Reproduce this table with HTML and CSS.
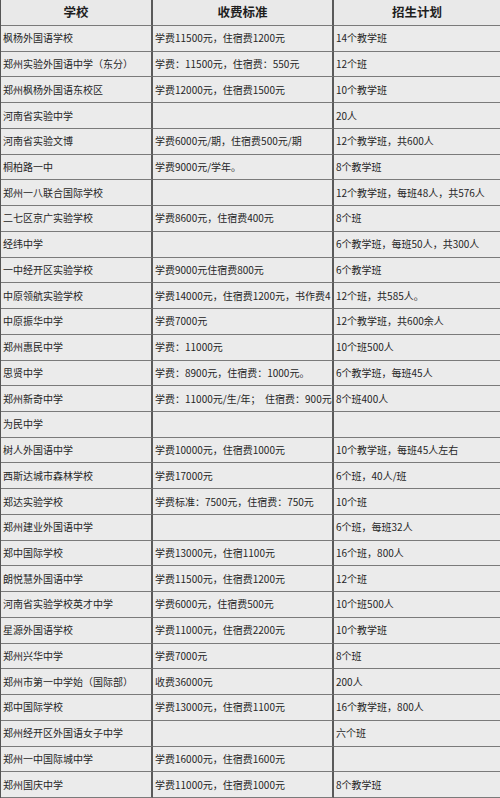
FILE: index.html
```html
<!DOCTYPE html>
<html lang="zh-CN">
<head>
<meta charset="utf-8">
<title>学校收费标准与招生计划</title>
<link rel="stylesheet" href="styles.css">
</head>
<body>
<div class="sheet">
  <div class="cell head">学校</div><div class="cell head">收费标准</div><div class="cell head">招生计划</div>
  <div class="cell">枫杨外国语学校</div><div class="cell">学费11500元，住宿费1200元</div><div class="cell">14个教学班</div>
  <div class="cell">郑州实验外国语中学（东分）</div><div class="cell">学费：11500元，住宿费：550元</div><div class="cell">12个班</div>
  <div class="cell">郑州枫杨外国语东校区</div><div class="cell">学费12000元，住宿费1500元</div><div class="cell">10个教学班</div>
  <div class="cell">河南省实验中学</div><div class="cell"></div><div class="cell">20人</div>
  <div class="cell">河南省实验文博</div><div class="cell">学费6000元/期，住宿费500元/期</div><div class="cell">12个教学班，共600人</div>
  <div class="cell">桐柏路一中</div><div class="cell">学费9000元/学年。</div><div class="cell">8个教学班</div>
  <div class="cell">郑州一八联合国际学校</div><div class="cell"></div><div class="cell">12个教学班，每班48人，共576人</div>
  <div class="cell">二七区京广实验学校</div><div class="cell">学费8600元，住宿费400元</div><div class="cell">8个班</div>
  <div class="cell">经纬中学</div><div class="cell"></div><div class="cell">6个教学班，每班50人，共300人</div>
  <div class="cell">一中经开区实验学校</div><div class="cell">学费9000元住宿费800元</div><div class="cell">6个教学班</div>
  <div class="cell">中原领航实验学校</div><div class="cell">学费14000元，住宿费1200元，书作费4</div><div class="cell">12个班，共585人。</div>
  <div class="cell">中原振华中学</div><div class="cell">学费7000元</div><div class="cell">12个教学班，共600余人</div>
  <div class="cell">郑州惠民中学</div><div class="cell">学费：11000元</div><div class="cell">10个班500人</div>
  <div class="cell">思贤中学</div><div class="cell">学费：8900元，住宿费：1000元。</div><div class="cell">6个教学班，每班45人</div>
  <div class="cell">郑州新奇中学</div><div class="cell">学费：11000元/生/年；&nbsp; 住宿费：900元</div><div class="cell">8个班400人</div>
  <div class="cell">为民中学</div><div class="cell"></div><div class="cell"></div>
  <div class="cell">树人外国语中学</div><div class="cell">学费10000元，住宿费1000元</div><div class="cell">10个教学班，每班45人左右</div>
  <div class="cell">西斯达城市森林学校</div><div class="cell">学费17000元</div><div class="cell">6个班，40人/班</div>
  <div class="cell">郑达实验学校</div><div class="cell">学费标准：7500元，住宿费：750元</div><div class="cell">10个班</div>
  <div class="cell">郑州建业外国语中学</div><div class="cell"></div><div class="cell">6个班，每班32人</div>
  <div class="cell">郑中国际学校</div><div class="cell">学费13000元，住宿1100元</div><div class="cell">16个班，800人</div>
  <div class="cell">朗悦慧外国语中学</div><div class="cell">学费11500元，住宿费1200元</div><div class="cell">12个班</div>
  <div class="cell">河南省实验学校英才中学</div><div class="cell">学费6000元，住宿费500元</div><div class="cell">10个班500人</div>
  <div class="cell">星源外国语学校</div><div class="cell">学费11000元，住宿费2200元</div><div class="cell">10个教学班</div>
  <div class="cell">郑州兴华中学</div><div class="cell">学费7000元</div><div class="cell">8个班</div>
  <div class="cell">郑州市第一中学始（国际部）</div><div class="cell">收费36000元</div><div class="cell">200人</div>
  <div class="cell">郑中国际学校</div><div class="cell">学费13000元，住宿费1100元</div><div class="cell">16个教学班，800人</div>
  <div class="cell">郑州经开区外国语女子中学</div><div class="cell"></div><div class="cell">六个班</div>
  <div class="cell">郑州一中国际城中学</div><div class="cell">学费16000元，住宿费1600元</div><div class="cell"></div>
  <div class="cell">郑州国庆中学</div><div class="cell">学费11000元，住宿费1000元</div><div class="cell">8个教学班</div>
</div>
</body>
</html>
```
FILE: styles.css
```css
* { box-sizing: border-box; }
html, body {
  margin: 0;
  padding: 0;
  background: #ebebeb;
}
.sheet {
  width: 500px;
  height: 798px;
  display: grid;
  grid-template-columns: 152px 181px 167px;
  grid-template-rows: 26px repeat(30, 1fr);
  border-left: 1px solid #555;
  background: #ebebeb;
  font-family: "Noto Sans CJK SC", "Noto Sans", sans-serif;
  font-size: 10px;
  color: #262626;
}
.cell {
  display: flex;
  align-items: center;
  padding: 0 2px 0 2px;
  border-bottom: 1px solid #7a7a7a;
  border-right: 2px solid #5a5a5a;
  white-space: nowrap;
  overflow: hidden;
  line-height: 1;
}
.cell:nth-child(3n) {
  border-right: 1px solid #6a6a6a;
}
.head {
  justify-content: center;
  font-weight: bold;
  font-size: 12.5px;
  color: #1e1e1e;
  background: #e9e9e9;
}
```
